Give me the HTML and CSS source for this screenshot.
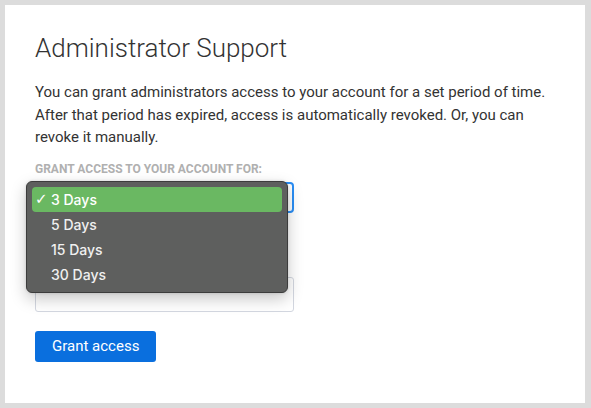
FILE: index.html
```html
<!DOCTYPE html>
<html>
<head>
<meta charset="utf-8">
<link rel="stylesheet" href="styles.css">
</head>
<body>
<div class="panel">
  <h1 class="title">Administrator Support</h1>
  <p class="intro">You can grant administrators access to your account for a set period of time. After that period has expired, access is automatically revoked. Or, you can revoke it manually.</p>
  <div class="field-label">Grant access to your account for:</div>
  <div class="select-wrap">
    <div class="select"><span class="select-value"></span><span class="arrow"></span></div>
    <div class="menu">
      <div class="item selected"><span class="check">✓</span>3 Days</div>
      <div class="item">5 Days</div>
      <div class="item">15 Days</div>
      <div class="item">30 Days</div>
    </div>
  </div>
  <div class="input"></div>
  <button class="btn">Grant access</button>
</div>
</body>
</html>
```

FILE: styles.css
```css
html, body {
  margin: 0;
  padding: 0;
}
body {
  background: #dcdcdc;
  font-family: Roboto, "Liberation Sans", sans-serif;
  color: #333;
}
.panel {
  box-sizing: border-box;
  margin: 5px;
  width: 580px;
  height: 398px;
  background: #fff;
  padding: 28px 30px 30px 30px;
}
.title {
  margin: 0;
  font-size: 26px;
  line-height: 30px;
  font-weight: 300;
  color: #333;
}
.intro {
  margin: 18px 0 0 0;
  font-size: 15px;
  line-height: 22.6px;
  color: #333;
}
.field-label {
  margin-top: 12px;
  font-size: 12px;
  line-height: 16px;
  font-weight: 700;
  text-transform: uppercase;
  color: #b0b0b0;
}
.select-wrap {
  position: relative;
  margin-top: 5px;
  width: 259px;
}
.select {
  box-sizing: border-box;
  height: 31px;
  border: 2px solid #2a8ef5;
  border-radius: 4px;
  background: #fff;
  display: flex;
  align-items: center;
  padding: 0 8px;
  font-size: 14px;
}
.select-value { flex: 1; }
.arrow {
  width: 0;
  height: 0;
  border-left: 3px solid transparent;
  border-right: 3px solid transparent;
  border-top: 4px solid #333;
  margin-right: -4px;
}
.menu {
  position: absolute;
  left: -9px;
  top: -1px;
  width: 262px;
  box-sizing: border-box;
  background: #5e5f5e;
  border: 1px solid #3c3c3c;
  border-radius: 6px;
  padding: 5px;
  box-shadow: 0 6px 16px rgba(0,0,0,0.22), 0 0 3px rgba(0,0,0,0.15);
  font-family: Inter, "Liberation Sans", sans-serif;
  z-index: 2;
}
.item {
  position: relative;
  height: 25px;
  line-height: 25px;
  padding-left: 19px;
  font-size: 14px;
  font-weight: 500;
  color: #f0f0f0;
  border-radius: 4px;
}
.item.selected {
  background: #6ab862;
  color: #fff;
}
.check {
  position: absolute;
  left: 3px;
  top: 0;
  font-size: 15px;
  font-family: "DejaVu Sans", sans-serif;
}
.input {
  box-sizing: border-box;
  margin-top: 64px;
  width: 259px;
  height: 35px;
  border: 1px solid #d3d7e0;
  border-radius: 3px;
}
.btn {
  display: block;
  margin-top: 19px;
  height: 31px;
  padding: 0 17px;
  border: none;
  border-radius: 3px;
  background: #0a6fde;
  color: #fff;
  font-family: Roboto, "Liberation Sans", sans-serif;
  font-size: 15px;
}
```
